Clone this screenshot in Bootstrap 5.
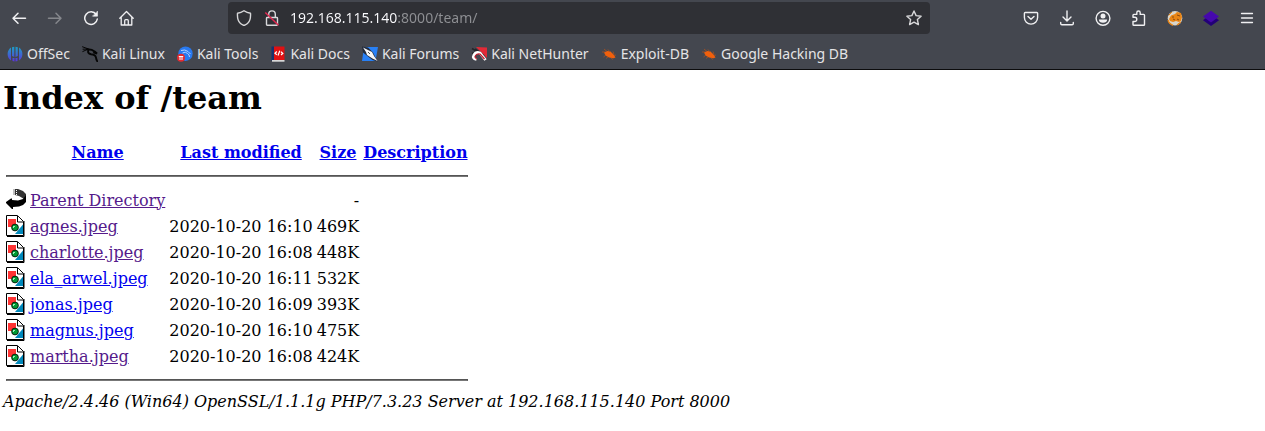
<!DOCTYPE html>
<html lang="en">
<head>
<meta charset="utf-8">
<meta name="viewport" content="width=device-width, initial-scale=1">
<title>Index of /team</title>
<link href="https://cdn.jsdelivr.net/npm/bootstrap@5.3.0/dist/css/bootstrap.min.css" rel="stylesheet">
<style>
  body { font-family: "DejaVu Serif", serif; font-size: 16px; line-height: 19px; color: #000; background: #fff; }
  .chrome { background: #44474f; border-bottom: 1px solid #0c0c0d; font-family: "Noto Sans", sans-serif; color: #e4e4e6; }
  .toolbar { height: 36px; padding-left: 1px; }
  .tool { width: 36px; height: 36px; padding: 0; border: 0; background: none; color: #f0f0f2; display: flex; align-items: center; justify-content: center; }
  .tool:disabled { color: #85878c; }
  .tool svg, .urlbar svg { display: block; flex: none; }
  .spring { flex: 83 1 0; }
  .urlbar { flex: 686 1 0; height: 32px; background: #2f3035; border-radius: 4px; padding: 0 8px; color: #d8d8da; gap: 12px; }
  .address-box { min-width: 0; padding: 0; margin-left: -2px; border: 0; outline: 0; font-size: 14px; line-height: 20px; color: transparent;
    background: linear-gradient(90deg, #fbfbfe 107px, #8f9094 107px); -webkit-background-clip: text; background-clip: text; }
  .urlbar button { border: 0; padding: 0; background: none; color: inherit; }
  .bookmarks { height: 33px; padding: 2px 7px 0; gap: 12px; font-size: 14px; line-height: 20px; }
  .bookmarks a { color: inherit; text-decoration: none; gap: 4px; white-space: nowrap; }
  .listing { padding: 10px 3px 20px; }
  .listing h1 { font-size: 32px; line-height: 37px; font-weight: 700; margin: 0 0 21px; }
  .listing a { color: #0000ee; text-decoration: underline; }
  .listing a.seen { color: #551a8b; }
  .files { border-collapse: separate; border-spacing: 2px; }
  .files th, .files td { padding: 1px; white-space: pre; }
  .files th { text-align: center; }
  .files tr { height: 24px; }
  .files tr.rule { height: 20px; }
  .files svg { display: block; }
  .files hr { margin: 8px 0; border: 1px solid #555; border-bottom-color: #777; opacity: 1; height: 2px; }
  .listing address { font-style: italic; line-height: 19px; margin: 0; }
</style>
<script src="https://cdn.jsdelivr.net/npm/bootstrap@5.3.0/dist/js/bootstrap.bundle.min.js"></script>
</head>
<body>
<svg width="0" height="0" class="position-absolute" aria-hidden="true">
  <defs>
    <linearGradient id="osg" x1="0" y1="0" x2="0" y2="1"><stop offset="0" stop-color="#1c9fc4"/><stop offset="1" stop-color="#5b35dc"/></linearGradient>
    <symbol id="picture" viewBox="0 0 20 22">
      <path d="M.5.500h11l6 6v14H.5z" fill="#fff" stroke="#000"/>
      <path d="M18 6v15.500H1" fill="none" stroke="#000"/>
      <path d="M11.500 1v6H17" fill="#fff" stroke="#000"/>
      <path d="M2 4h8v8H2z" fill="#f33"/>
      <path d="M17 9.500V19H9z" fill="#08b"/>
      <circle cx="9" cy="12.500" r="3.400" fill="#093" stroke="#000" stroke-width=".8"/>
      <path d="M7 11h2v1H8v1H7z" fill="#9eb"/>
    </symbol>
    <symbol id="bug" viewBox="0 0 16 16">
      <path d="m3 6.500 3-1.500 3.500.5 3 3 2 3-2 .8-4.500-.8-3.500-2z" fill="#f0600c"/>
      <path d="M1 6h3M3 3l3 2.500M7 3.500l2 2.500M12 5.500l1 3M13 9.500l2-.5M2.500 11 5 9M5 12.500l2-1.500M10 12l2 1.500" stroke="#a9501f" stroke-width=".8" fill="none"/>
    </symbol>
  </defs>
</svg>

<header class="chrome">
  <nav class="toolbar d-flex align-items-center" aria-label="Navigation">
    <button class="tool" type="button" aria-label="Back"><svg width="16" height="16" fill="none" stroke="currentColor" stroke-width="1.500" stroke-linecap="round" stroke-linejoin="round"><path d="M14.500 8.200H2M7 3.200l-5 5 5 5"/></svg></button>
    <button class="tool" type="button" aria-label="Forward" disabled><svg width="16" height="16" fill="none" stroke="currentColor" stroke-width="1.500" stroke-linecap="round" stroke-linejoin="round"><path d="M1.500 8.200H14M9 3.200l5 5-5 5"/></svg></button>
    <button class="tool" type="button" aria-label="Reload"><svg width="16" height="16" fill="none" stroke="currentColor" stroke-width="1.500" stroke-linecap="round"><path d="M13.200 4.500A6.300 6.300 0 1 0 14.300 9"/><path d="M14.500 1.500v4.700H9.800z" fill="currentColor" stroke-width=".6" stroke-linejoin="round"/></svg></button>
    <button class="tool" type="button" aria-label="Home"><svg width="16" height="16" fill="none" stroke="currentColor" stroke-width="1.300" stroke-linejoin="round" stroke-linecap="round"><path d="M.8 8.300 7.500 1.500 14.200 8.300M2.200 7v8h10.600V7M5.700 15v-4.300q0-1 1-1h1.600q1 0 1 1V15"/></svg></button>
    <div class="spring"></div>
    <div class="urlbar d-flex align-items-center">
      <svg width="16" height="16" fill="none" stroke="currentColor" stroke-width="1.400" stroke-linejoin="round"><path d="M8 .8Q5 3 1.500 3.200 1 10.500 4.500 13.500q1.500 1.300 3.500 2 2-.7 3.500-2Q15 10.500 14.500 3.200 11 3 8 .8z"/></svg>
      <svg width="16" height="16" fill="none" stroke="currentColor" stroke-width="1.400" stroke-linejoin="round"><path d="M3.200 7.500h9.600q.7 0 .7.700v6.400q0 .7-.7.700H3.200q-.7 0-.7-.7V8.200q0-.7.700-.7zM4.700 7V4.200a3.300 3.300 0 0 1 6.600 0V7"/><path d="M1.300 2.500 14.500 15.300" stroke="#e22850" stroke-width="1.500"/></svg>
      <input class="address-box flex-grow-1" type="text" aria-label="Address" value="192.168.115.140:8000/team/" spellcheck="false">
      <button type="button" aria-label="Bookmark this page"><svg width="16" height="16" fill="none" stroke="currentColor" stroke-width="1.400" stroke-linejoin="round"><path d="m8 1 2.100 4.600 5 .6-3.700 3.400 1 5L8 12.200l-4.400 2.400 1-5L.9 6.200l5-.6z"/></svg></button>
    </div>
    <div class="spring"></div>
    <button class="tool" type="button" aria-label="Save to Pocket"><svg width="16" height="16" fill="none" stroke="currentColor" stroke-width="1.400" stroke-linecap="round" stroke-linejoin="round"><path d="M2.200 2.500h11.600q.8 0 .8.800v4.200a6.600 6.600 0 0 1-13.200 0V3.300q0-.8.800-.8zM5 6.500l3 2.800 3-2.800"/></svg></button>
    <button class="tool" type="button" aria-label="Downloads"><svg width="16" height="16" fill="none" stroke="currentColor" stroke-width="1.400" stroke-linecap="round" stroke-linejoin="round"><path d="M8 1v9.500M4 7l4 4 4-4M1.700 12.500v1q0 1.200 1.200 1.200h10.200q1.200 0 1.200-1.200v-1"/></svg></button>
    <button class="tool" type="button" aria-label="Account"><svg width="16" height="16" fill="none"><circle cx="8" cy="8.300" r="6.900" stroke="currentColor" stroke-width="1.400"/><circle cx="8" cy="6" r="2.500" fill="currentColor"/><path d="M3.800 9.500h8.400q-.3 3.200-4.200 3.200T3.800 9.500z" fill="currentColor"/></svg></button>
    <button class="tool" type="button" aria-label="Extensions"><svg width="16" height="16" fill="none" stroke="currentColor" stroke-width="1.400" stroke-linejoin="round"><path d="M2 7.300V5.200q0-.8.800-.8h3V2.700a1.700 1.700 0 0 1 3.400 0v1.700h3.500q.8 0 .8.800v9.300q0 .8-.8.800H2.800q-.8 0-.8-.8V11.500h1.700a2 2 0 0 0 0-4.200H2z"/></svg></button>
    <button class="tool" type="button" aria-label="FoxyProxy"><svg width="16" height="16"><circle cx="8" cy="8.300" r="7.300" fill="#d8d5cc"/><path d="m2 9 2-3.500L8 4l2-2 4 1 1 4-1 4-2 1-3-1-3 1-3-1z" fill="#e98515"/><path d="M1 10q1 4 5 5.300M10 15l3-2" stroke="#e98515" stroke-width="1.300" fill="none"/><path d="M5 7h2M10 5l3 1M6 9l2 1M10 9l2 1" stroke="#8c4a10"/><path d="M1.500 5.500 5 2M14 12l-3 2" stroke="#e98515"/></svg></button>
    <button class="tool" type="button" aria-label="Wappalyzer"><svg width="16" height="16"><path d="m0 10.200 2.500-2h11l2.500 2L8 16z" fill="#230078"/><path d="m8 .8 8 5.700-8 6-8-6z" fill="#4608ad"/></svg></button>
    <button class="tool" type="button" aria-label="Menu"><svg width="16" height="16" stroke="currentColor" stroke-width="1.300" stroke-linecap="round"><path d="M2.500 3.500h11M2.500 8h11M2.500 12.500h11"/></svg></button>
  </nav>
  <nav class="bookmarks d-flex align-items-center" aria-label="Bookmarks">
    <a class="d-flex align-items-center" href="#"><svg width="16" height="16" fill="url(#osg)"><path d="M4 1.500v13Q.6 12 .6 8T4 1.500zM5 1.300l2.300-.6V11L5 10zM8.500.7l2.300.6V10l-2.300 1zM12 1.500q3.400 2.500 3.400 6.500T12 14.500zM5.500 12h2v3.500l-2-.5zM8.500 12h2v3l-2 .5z"/></svg>OffSec</a>
    <a class="d-flex align-items-center" href="#"><svg width="16" height="16" fill="none" stroke="#050505" stroke-linecap="round"><path d="M.5.8 6 2.800M1 3.200l5-.2M.8 5.500 5 3.600"/><path d="M5 3.200q5-.2 8 2.500l2 1.800-3-.8M6.500 4Q5 7.500 9 8.300q4.500.5 5 3.300.2 2 1.300 3.700" stroke-width="1.900"/></svg>Kali Linux</a>
    <a class="d-flex align-items-center" href="#"><svg width="16" height="16"><circle cx="8.500" cy="7.700" r="7.200" fill="#2879f0"/><path d="M4 4.500q4-1.500 7 1l2.500 2.500M5.500 7q3-2 5 .5 2 1 2 3.500" fill="none" stroke="#b5d2ff"/><circle cx="4" cy="11.800" r="4" fill="#e12c32"/><path d="M1.800 10.500h4.400M3 10.500V14M5 10.500V14" stroke="#fff"/></svg>Kali Tools</a>
    <a class="d-flex align-items-center" href="#"><svg width="16" height="16"><path d="M1.500.5H4V15H1.500z" fill="#16326e"/><path d="M4 .5h10.500V14H4z" fill="#df1113"/><path d="M2 14h12.500v1.700H2z" fill="#d8d8d8"/><path d="M6.800 5.500 5 7.200l1.800 1.600M11 5.800l1.800 1.700L11 9M9.800 4.800 8 9.500" fill="none" stroke="#fff" stroke-width="1.200"/></svg>Kali Docs</a>
    <a class="d-flex align-items-center" href="#"><svg width="16" height="16"><path d="M2 1h14l-2.500 14H0z" fill="#2880f5"/><path d="M0 .5 6 1.500l5 5 4.500 9-5-1.500L1 6.500z" fill="#222b3c"/><path d="m1 1.500 5 2.500 4 2 2 4 3.500 5-5-2.500L5 9 4 6z" fill="#f6f6f6"/><path d="m6 6 2 2" stroke="#555"/></svg>Kali Forums</a>
    <a class="d-flex align-items-center" href="#"><svg width="16" height="16"><path d="m5 1 11 .5V12z" fill="#e22a37"/><path d="M1 2.500 6 5.500M1 7.500l3-1M4 3l9 7" fill="none" stroke="#26262a" stroke-width="1.600"/><path d="M5.500 13.500Q1 12.500 3 9t6-2l5.500 7" fill="none" stroke="#fff" stroke-width="2.800"/><path d="M6 13q-3-1.500-1.500-3.500T9 8l4.500 5" fill="none" stroke="#c51c2d" stroke-width="1.200"/></svg>Kali NetHunter</a>
    <a class="d-flex align-items-center" href="#"><svg width="16" height="16"><use href="#bug"/></svg>Exploit-DB</a>
    <a class="d-flex align-items-center" href="#"><svg width="16" height="16"><use href="#bug"/></svg>Google Hacking DB</a>
  </nav>
</header>

<main class="listing">
  <h1>Index of /team</h1>
  <table class="files">
    <thead>
      <tr><th></th><th><a href="#">Name</a></th><th><a href="#">Last modified</a></th><th><a href="#">Size</a></th><th><a href="#">Description</a></th></tr>
    </thead>
    <tbody>
      <tr class="rule"><td colspan="5"><hr></td></tr>
      <tr><td><svg width="20" height="22"><path d="M9 0h3l5 2 3 3v4l-2 1-5-3-4-1z" fill="#333"/><path d="M8.500 0v7M10.500 1v5" stroke="#fff" stroke-dasharray="1 1"/><path d="M8 .5v6" stroke="#000" stroke-dasharray="1 1"/><path d="M20 6v7l-3 3-4 1.500-6 .5v2H6l-6-6v-1l5-3.500h1V11l6 .5 5-1.500z" fill="#000"/></svg></td><td><a class="seen" href="#">Parent Directory</a></td><td></td><td class="text-end">-</td><td></td></tr>
      <tr><td><svg width="20" height="22"><use href="#picture"/></svg></td><td><a class="seen" href="#">agnes.jpeg</a></td><td>2020-10-20 16:10</td><td class="text-end">469K</td><td></td></tr>
      <tr><td><svg width="20" height="22"><use href="#picture"/></svg></td><td><a class="seen" href="#">charlotte.jpeg</a></td><td>2020-10-20 16:08</td><td class="text-end">448K</td><td></td></tr>
      <tr><td><svg width="20" height="22"><use href="#picture"/></svg></td><td><a href="#">ela_arwel.jpeg</a></td><td>2020-10-20 16:11</td><td class="text-end">532K</td><td></td></tr>
      <tr><td><svg width="20" height="22"><use href="#picture"/></svg></td><td><a href="#">jonas.jpeg</a></td><td>2020-10-20 16:09</td><td class="text-end">393K</td><td></td></tr>
      <tr><td><svg width="20" height="22"><use href="#picture"/></svg></td><td><a href="#">magnus.jpeg</a></td><td>2020-10-20 16:10</td><td class="text-end">475K</td><td></td></tr>
      <tr><td><svg width="20" height="22"><use href="#picture"/></svg></td><td><a class="seen" href="#">martha.jpeg</a></td><td>2020-10-20 16:08</td><td class="text-end">424K</td><td></td></tr>
      <tr class="rule"><td colspan="5"><hr></td></tr>
    </tbody>
  </table>
  <address>Apache/2.4.46 (Win64) OpenSSL/1.1.1g PHP/7.3.23 Server at 192.168.115.140 Port 8000</address>
</main>
</body>
</html>
